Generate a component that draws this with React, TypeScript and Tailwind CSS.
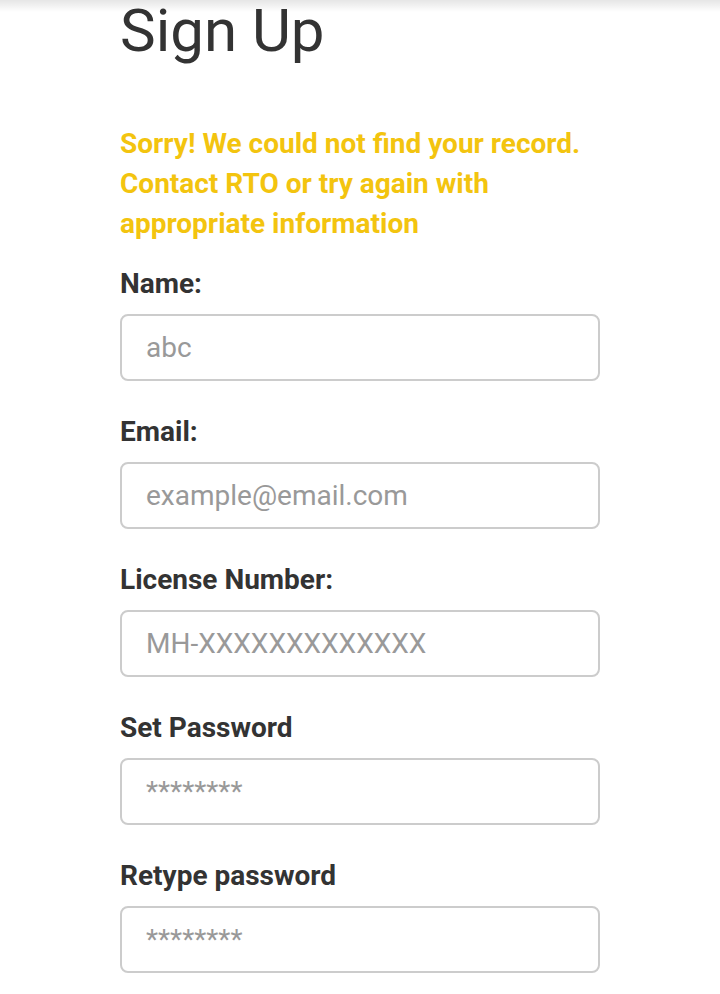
import React from 'react';

const fields = [
  { label: 'Name:', placeholder: 'abc', type: 'text' },
  { label: 'Email:', placeholder: 'example@email.com', type: 'email' },
  { label: 'License Number:', placeholder: 'MH-XXXXXXXXXXXXX', type: 'text' },
  { label: 'Set Password', placeholder: '********', type: 'password' },
  { label: 'Retype password', placeholder: '********', type: 'password' },
];

const App: React.FC = () => {
  return (
    <div className="relative min-h-screen bg-white font-['Roboto',sans-serif] text-[#333]">
      <div className="pointer-events-none absolute inset-x-0 top-0 h-3 bg-gradient-to-b from-black/10 to-transparent" />

      <div className="mx-auto w-[480px]">
        <h1 className="pt-[1px] text-[60px] font-normal leading-[60px]">Sign Up</h1>

        <p className="mt-[63px] text-[28px] font-bold leading-[40px] text-[#f3c40f]">
          Sorry! We could not find your record. Contact RTO or try again with appropriate information
        </p>

        <form className="mt-[22px] flex flex-col">
          {fields.map((f, i) => (
            <div key={f.label} className={i > 0 ? 'mt-[33px]' : ''}>
              <label className="block text-[28px] font-bold leading-[36px]">{f.label}</label>
              <input
                type={f.type}
                placeholder={f.placeholder}
                className="mt-[12px] block h-[67px] w-full rounded-[8px] border-2 border-[#cccccc] px-[24px] text-[28px] outline-none placeholder:text-[#999]"
              />
            </div>
          ))}
        </form>
      </div>
    </div>
  );
};

export default App;
